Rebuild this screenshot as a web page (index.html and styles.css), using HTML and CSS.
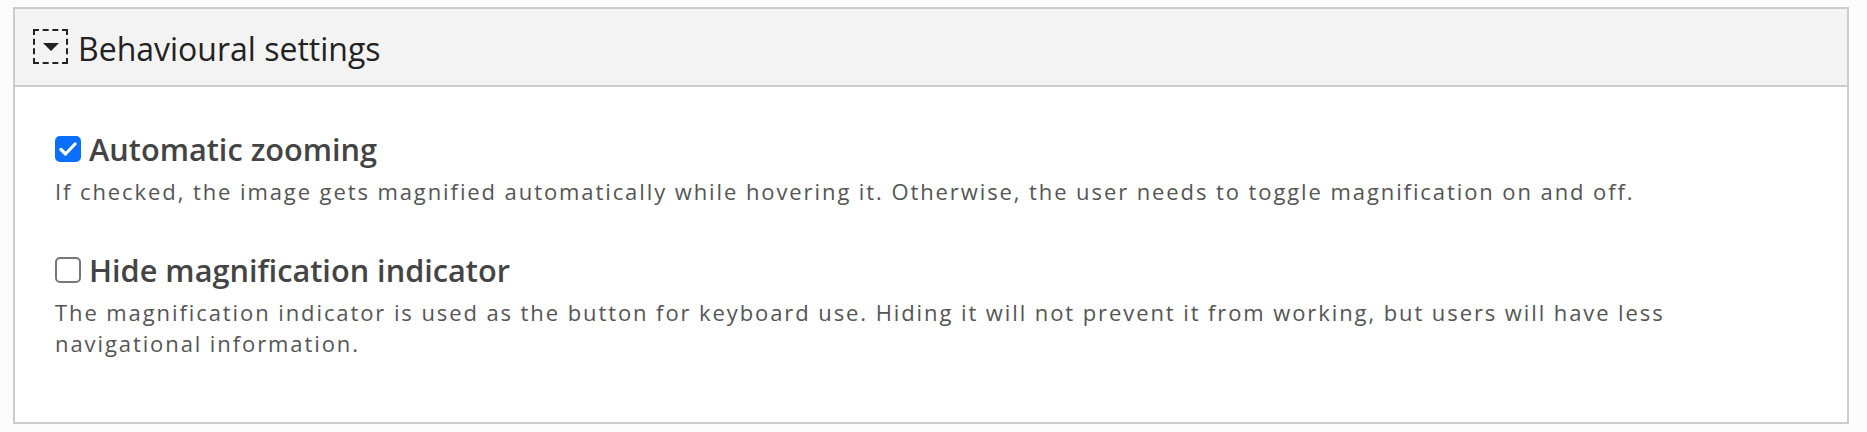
FILE: index.html
```html
<!DOCTYPE html>
<html lang="en">
<head>
<meta charset="utf-8">
<title>Behavioural settings</title>
<link rel="stylesheet" href="styles.css">
</head>
<body>
<section class="panel">
  <div class="panel-head">
    <span class="toggle" aria-hidden="true"><svg width="16" height="8" viewBox="0 0 16 8"><path d="M0 0 H16 L8 8 Z" fill="#222"/></svg></span>
    <h2 class="panel-title">Behavioural settings</h2>
  </div>
  <div class="panel-body">
    <div class="option">
      <label class="option-label"><span class="cb cb-on"><svg width="18" height="14" viewBox="0 0 18 14"><path d="M2 7.5 L6.5 12 L16 2" fill="none" stroke="#fff" stroke-width="3.2" stroke-linecap="round" stroke-linejoin="round"/></svg></span>Automatic zooming</label>
      <p class="option-desc">If checked, the image gets magnified automatically while hovering it. Otherwise, the user needs to toggle magnification on and off.</p>
    </div>
    <div class="option">
      <label class="option-label"><span class="cb"></span>Hide magnification indicator</label>
      <p class="option-desc">The magnification indicator is used as the button for keyboard use. Hiding it will not prevent it from working, but users will have less navigational information.</p>
    </div>
  </div>
</section>
</body>
</html>
```
FILE: styles.css
```css
html, body {
  margin: 0;
  background: #fcfcfc;
}
body {
  padding: 7px 18px 8px 13px;
  font-family: "Open Sans", "Liberation Sans", sans-serif;
}
.panel {
  border: 2px solid #cccccc;
  background: #ffffff;
  height: 417px;
  box-sizing: border-box;
}
.panel-head {
  display: flex;
  align-items: center;
  gap: 10px;
  background: #f3f3f3;
  border-bottom: 2px solid #cccccc;
  padding: 20px 18px 21px 18px;
  height: 78px;
  box-sizing: border-box;
}
.toggle {
  width: 35px;
  height: 35px;
  box-sizing: border-box;
  border: 2px dashed #222;
  display: flex;
  align-items: center;
  justify-content: center;
}
.panel-title {
  margin: 5px 0 0 0;
  font-size: 32px;
  font-weight: 400;
  color: #222;
  line-height: 36px;
}
.panel-body {
  padding: 41px 40px 0 40px;
}
.option {
  margin-bottom: 42px;
}
.option-label {
  display: flex;
  align-items: center;
  gap: 8px;
  font-size: 30.7px;
  font-weight: 600;
  color: #444;
  line-height: 42px;
}
.cb {
  width: 26px;
  height: 26px;
  box-sizing: border-box;
  border: 2px solid #777;
  border-radius: 5px;
  background: #fff;
  display: flex;
  align-items: center;
  justify-content: center;
  flex: none;
}
.cb-on {
  background: #0b6efd;
  border-color: #0b6efd;
}
.option-desc {
  margin: 6px 0 0 0;
  font-size: 22px;
  line-height: 31px;
  letter-spacing: 1.91px;
  color: #555;
}
```
